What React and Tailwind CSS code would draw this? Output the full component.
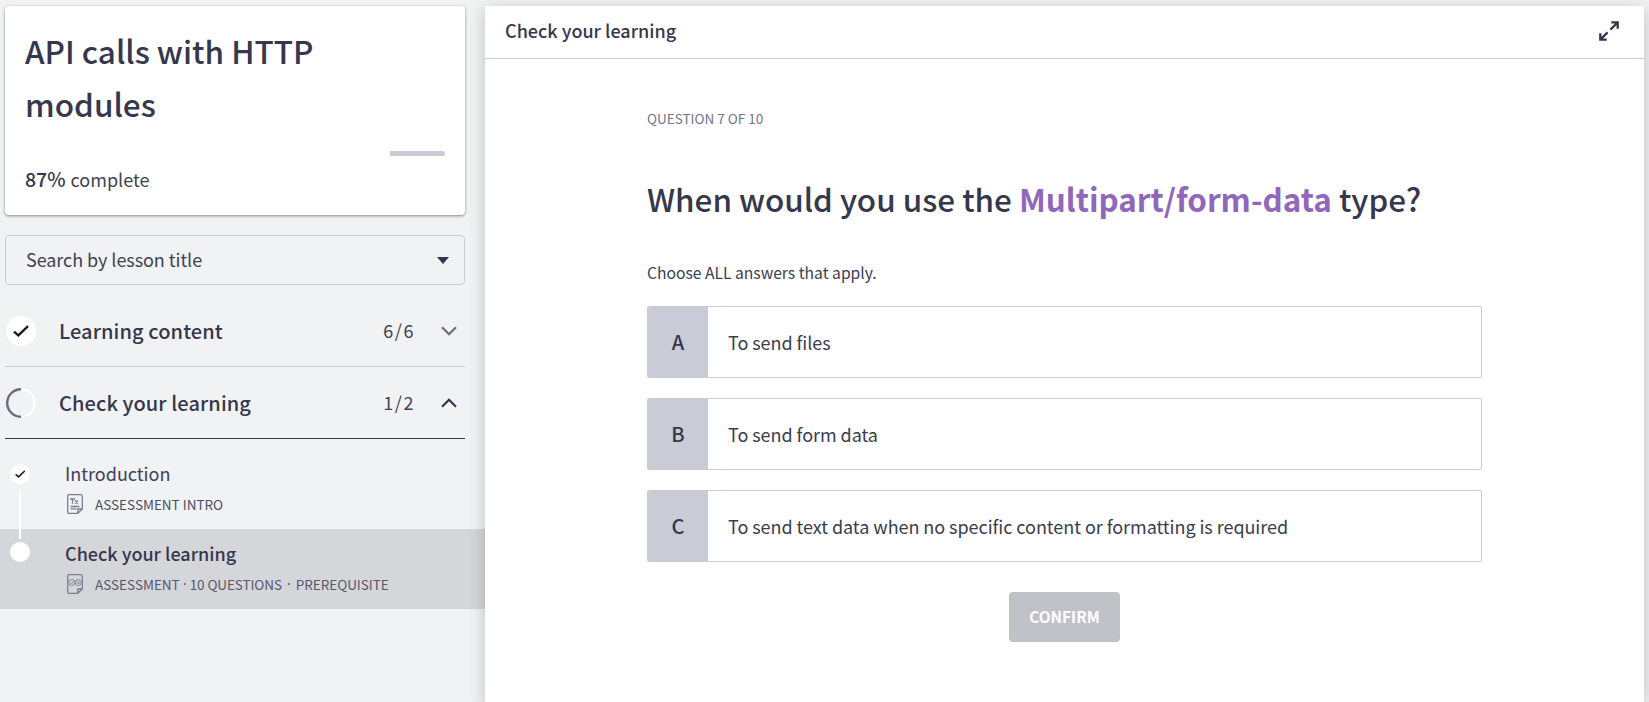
import React from "react";

function Check({ className, width }) {
  return (
    <svg className={className} viewBox="0 0 16 12" fill="none" stroke="#1c1d22" strokeWidth={width}>
      <path d="M1 6.6 L5.4 10.4 L15 1.2" />
    </svg>
  );
}

function Chevron({ up, color }) {
  return (
    <svg className="h-[10px] w-4" viewBox="0 0 16 10" fill="none" stroke={color} strokeWidth="2.2">
      <path d={up ? "M1 8.8 L8 1.8 L15 8.8" : "M1 1.2 L8 8.2 L15 1.2"} />
    </svg>
  );
}

function HalfRing() {
  return (
    <svg className="size-[30px]" viewBox="0 0 30 30" fill="none">
      <circle cx="15" cy="15" r="14.6" stroke="#c9cbd2" strokeWidth=".6" strokeDasharray="2 2" />
      <path d="M15 1.2 A13.8 13.8 0 0 1 15 28.8" stroke="#fff" strokeWidth="2.4" />
      <path d="M15 1.2 A13.8 13.8 0 0 0 15 28.8" stroke="#696b80" strokeWidth="2.4" />
    </svg>
  );
}

function PageIcon({ children }) {
  return (
    <svg className="h-5 w-4" viewBox="0 0 16 20" fill="none" stroke="#7c7f92" strokeWidth="1.3">
      <path d="M10.8 19.3 H2.2 Q.7 19.3 .7 17.8 V2.2 Q.7 .7 2.2 .7 H13.8 Q15.3 .7 15.3 2.2 V15 L10.8 19.3 V15 H15.3" />
      {children}
    </svg>
  );
}

function Section({ icon, title, count, up, border, color }) {
  return (
    <div className={"flex h-[72px] items-center border-b pl-px pr-2 " + border}>
      <div className="w-[30px]">{icon}</div>
      <div className="ml-[23px] flex-1 text-[20px] font-medium tracking-[0.1px]">{title}</div>
      <div className="mr-[26px] text-[18px] tracking-[1.6px] text-[#3f4254]">{count}</div>
      <Chevron up={up} color={color} />
    </div>
  );
}

function Option({ letter, text }) {
  return (
    <div className="flex h-[72px] overflow-hidden rounded-[2px] border border-[#c9cbd6]">
      <div className="flex w-[60px] items-center justify-center bg-[#c9cbd6] text-[20px] font-medium">{letter}</div>
      <div className="flex items-center pl-5 text-[18px] tracking-[-0.05px] text-[#3a3d4e]">{text}</div>
    </div>
  );
}

export default function App() {
  return (
    <div className="flex h-[702px] w-[1649px] overflow-hidden bg-[#f1f2f4] font-['Noto_Sans_CJK_SC','Noto_Sans',sans-serif] text-[#35374d]">
      <aside className="w-[485px] pt-[6px]">
        <div className="ml-[5px] w-[460px]">
          <div className="h-[209px] rounded-[4px] bg-white px-5 pt-[18px] shadow-[0_1px_3px_rgba(0,0,0,0.45)]">
            <h1 className="h-[106px] w-[340px] text-[31.5px] font-medium leading-[53px]">API calls with HTTP modules</h1>
            <div className="mt-[21px] flex h-[5px] justify-end overflow-hidden bg-white">
              <div className="w-[55px] rounded-r-[3px] bg-[#c9cbd6]" />
            </div>
            <div className="mt-2 text-[18px] leading-[30px] text-[#3f4254]">
              <span className="mr-px text-[19.5px] font-medium leading-none text-[#35374d]">87%</span> complete
            </div>
          </div>
          <div className="mt-5 flex h-[50px] items-center justify-between rounded-[4px] border border-[#c9cbd6] pl-5 pr-[15px] text-[18px] tracking-[-0.06px] text-[#3f4254]">
            <span className="mb-[2px]">Search by lesson title</span>
            <svg className="h-[7px] w-3" viewBox="0 0 12 7" fill="#33354c"><path d="M0 0 H12 L6 7 Z" /></svg>
          </div>
          <div className="mt-[10px]">
            <Section
              icon={<div className="flex size-[30px] items-center justify-center rounded-full bg-white"><Check className="h-3 w-4" width="2.4" /></div>}
              title="Learning content" count="6/6" border="border-[#c9cbd6]" color="#696b80"
            />
            <Section icon={<HalfRing />} title="Check your learning" count="1/2" up border="border-[#33354c]" color="#33354c" />
          </div>
        </div>
        <div className="relative flex h-[90px] pl-[10px] pt-[17px]">
          <div className="mt-[8px] flex size-5 items-center justify-center rounded-full bg-white"><Check className="h-2 w-[10.5px]" width="2.3" /></div>
          <div className="absolute left-[19px] top-[50px] z-10 h-[50px] w-[2px] bg-white" />
          <div className="ml-[35px]">
            <div className="text-[18px] leading-[34px] text-[#3f4254]">Introduction</div>
            <div className="mt-[2px] flex h-[24px] items-center text-[13.5px] text-[#4b4e60]">
              <div className="ml-[2px] mr-3"><PageIcon><path d="M3 5 H8 M5.5 5 V9.8 M8 6.4 L11 9.8 M11 6.4 L8 9.8 M3.5 12.5 H12.5 M3.5 14.8 H9.5" /></PageIcon></div>
              ASSESSMENT INTRO
            </div>
          </div>
        </div>
        <div className="flex h-[80px] bg-[#d5d6da] pl-[10px] pt-[7px]">
          <div className="mt-[6px] size-5 rounded-full bg-white" />
          <div className="ml-[35px]">
            <div className="text-[18px] font-medium leading-[34px]">Check your learning</div>
            <div className="mt-[2px] flex h-[24px] items-center text-[13.5px] text-[#56586c]">
              <div className="ml-[2px] mr-3"><PageIcon><circle cx="4.8" cy="8.6" r="3" strokeWidth=".9" /><circle cx="11.2" cy="8.6" r="3" strokeWidth=".9" /><path strokeWidth=".9" d="M3.4 8.6 L4.6 9.8 L6.6 7.4 M9.8 7.2 L12.6 10 M12.6 7.2 L9.8 10" /></PageIcon></div>
              <span>ASSESSMENT</span>
              <span className="w-[10px] text-center font-['Noto_Sans',sans-serif]">·</span>
              <span className="tracking-[-0.1px]">10 QUESTIONS</span>
              <span className="w-[14px] text-center font-['Noto_Sans',sans-serif]">·</span>
              <span className="tracking-[-0.05px]">PREREQUISITE</span>
            </div>
          </div>
        </div>
      </aside>
      <main className="relative mt-[6px] w-[1159px] bg-white shadow-[0_4px_16px_rgba(0,0,0,0.22)]">
        <header className="flex h-[53px] items-center justify-between border-b border-[#c9cbd6] pl-5 pr-[25px]">
          <div className="mb-[3px] text-[18px] font-medium">Check your learning</div>
          <svg className="mb-[2px] size-5" viewBox="0 0 20 20" fill="none" stroke="#33354c" strokeWidth="2.3">
            <path d="M12.3 1.3 H18.7 V7.7 M18.3 1.7 L11.4 8.6 M7.7 18.7 H1.3 V12.3 M1.7 18.3 L8.6 11.4" />
          </svg>
        </header>
        <div className="ml-[162px] w-[835px]">
          <div className="pt-[48px] text-[13.5px] leading-[22px] text-[#727589]">QUESTION 7 OF 10</div>
          <h2 className="mt-[44px] whitespace-nowrap text-[31.43px] font-medium leading-[52px]">
            When would you use the <span className="font-bold text-[#9067bb]">Multipart/form-data</span> type?
          </h2>
          <div className="mt-[36px] text-[15.67px] leading-[24px] text-[#3a3d4e]">Choose ALL answers that apply.</div>
          <div className="mt-[21px] flex flex-col gap-5">
            <Option letter="A" text="To send files" />
            <Option letter="B" text="To send form data" />
            <Option letter="C" text="To send text data when no specific content or formatting is required" />
          </div>
          <button className="ml-[362px] mt-[30px] block h-[50px] w-[111px] rounded-[4px] bg-[#c1c2c8] text-[15.4px] font-bold text-white">CONFIRM</button>
        </div>
      </main>
    </div>
  );
}
